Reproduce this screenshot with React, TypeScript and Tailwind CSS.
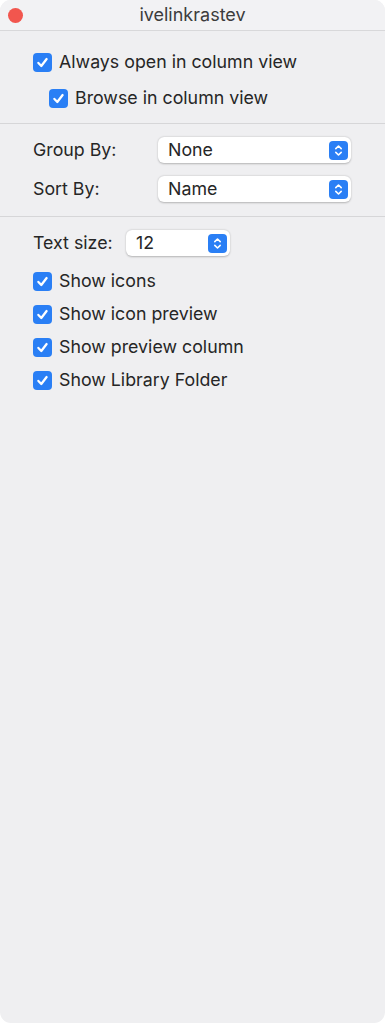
const font = { fontFamily: 'Inter, "Noto Sans", sans-serif' };

function Check({ label, indent }: { label: string; indent?: boolean }) {
  return (
    <div className={`flex items-center h-[20px] ${indent ? "pl-[49px]" : "pl-[33px]"}`}>
      <span className="w-[19px] h-[19px] rounded-[4px] bg-[#2a7ff5] flex items-center justify-center shrink-0">
        <svg width="13" height="13" viewBox="0 0 12 12" fill="none">
          <path d="M2.2 6.4 L4.9 9.2 L9.8 2.8" stroke="white" strokeWidth="2.1" strokeLinecap="round" strokeLinejoin="round" />
        </svg>
      </span>
      <span className="ml-[7px] text-[17.8px] text-[#262626] leading-none">{label}</span>
    </div>
  );
}

function Select({ value, width }: { value: string; width: string }) {
  return (
    <div className={`${width} h-[26px] bg-white rounded-[6px] shadow-[0_0.5px_2px_rgba(0,0,0,0.25)] flex items-center pl-[10px] pr-[3px]`}>
      <span className="flex-1 text-[17.8px] text-[#262626] leading-none">{value}</span>
      <span className="w-[19px] h-[19px] rounded-[4px] bg-[#2a7ff5] flex items-center justify-center">
        <svg width="9" height="13" viewBox="0 0 9 13" fill="none">
          <path d="M1.8 4.6 L4.5 2 L7.2 4.6 M1.8 8.4 L4.5 11 L7.2 8.4" stroke="white" strokeWidth="1.6" strokeLinecap="round" strokeLinejoin="round" />
        </svg>
      </span>
    </div>
  );
}

export default function App() {
  return (
    <div className="bg-white w-[385px] h-[1024px]" style={font}>
      <div className="h-[1023px] bg-[#efeff1] rounded-[11px] overflow-hidden flex flex-col">
        <div className="h-[31px] bg-[#f2f2f4] border-b border-[#d8d8da] flex items-center relative shrink-0">
          <span className="absolute left-[8px] top-[8px] w-[15px] h-[15px] rounded-full bg-[#f2564e]" />
          <span className="w-full text-center text-[18px] text-[#3c3c3c] leading-none">ivelinkrastev</span>
        </div>

        <div className="pt-[21px] flex flex-col gap-[16px]">
          <Check label="Always open in column view" />
          <Check label="Browse in column view" indent />
        </div>

        <div className="mt-[15px] border-t border-[#d6d6d8]" />

        <div className="pt-[13px] flex flex-col gap-[13px] pl-[33px]">
          <div className="flex items-center">
            <span className="w-[125px] text-[17.8px] text-[#262626] leading-none">Group By:</span>
            <Select value="None" width="w-[193px]" />
          </div>
          <div className="flex items-center">
            <span className="w-[125px] text-[17.8px] text-[#262626] leading-none">Sort By:</span>
            <Select value="Name" width="w-[193px]" />
          </div>
        </div>

        <div className="mt-[14px] border-t border-[#d6d6d8]" />

        <div className="pt-[13px] pl-[33px] flex items-center">
          <span className="w-[93px] text-[17.8px] text-[#262626] leading-none">Text size:</span>
          <Select value="12" width="w-[104px]" />
        </div>

        <div className="pt-[15px] flex flex-col gap-[13px]">
          <Check label="Show icons" />
          <Check label="Show icon preview" />
          <Check label="Show preview column" />
          <Check label="Show Library Folder" />
        </div>
      </div>
    </div>
  );
}
